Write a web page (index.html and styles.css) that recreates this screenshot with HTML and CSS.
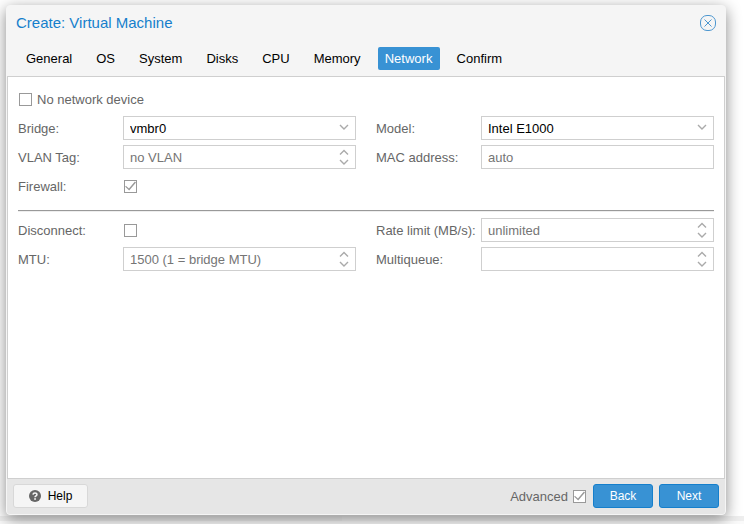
FILE: index.html
```html
<!DOCTYPE html>
<html lang="en">
<head>
    <meta charset="UTF-8">
    <meta name="viewport" content="width=device-width, initial-scale=1.0">
    <title>Create: Virtual Machine</title>
    <link rel="stylesheet" href="styles.css">
</head>
<body>
    <svg class="symbols" aria-hidden="true">
        <symbol id="down" viewBox="0 0 10 6">
            <path d="M1 1l4 4 4-4" fill="none" stroke="#aaa" stroke-width="1.4"/>
        </symbol>
        <symbol id="spin" viewBox="0 0 10 16">
            <path d="M1 5.500l4-4 4 4M1 11l4 4 4-4" fill="none" stroke="#aaa" stroke-width="1.4"/>
        </symbol>
    </svg>

    <form class="window">
        <header class="title-bar">
            <h1>Create: Virtual Machine</h1>
            <button type="button" class="close" aria-label="Close">
                <svg width="16" height="16" viewBox="0 0 16 16" fill="none" stroke="#4d97cf">
                    <rect x="0.5" y="0.5" width="15" height="15" rx="6.500"/>
                    <path d="M4.500 4.500l7 7M11.500 4.500l-7 7"/>
                </svg>
            </button>
        </header>
        <nav class="tabs">
            <button type="button">General</button>
            <button type="button">OS</button>
            <button type="button">System</button>
            <button type="button">Disks</button>
            <button type="button">CPU</button>
            <button type="button">Memory</button>
            <button type="button" class="active">Network</button>
            <button type="button">Confirm</button>
        </nav>

        <main class="panel">
            <div class="check-row">
                <input type="checkbox" id="nonet">
                <label for="nonet">No network device</label>
            </div>
            <div class="columns">
                <div class="column">
                    <div class="field">
                        <label for="bridge">Bridge:</label>
                        <div class="control">
                            <select id="bridge"><option>vmbr0</option></select>
                            <svg class="arrow down"><use href="#down"/></svg>
                        </div>
                    </div>
                    <div class="field">
                        <label for="vlan">VLAN Tag:</label>
                        <div class="control">
                            <input type="text" id="vlan" placeholder="no VLAN">
                            <svg class="arrow spin"><use href="#spin"/></svg>
                        </div>
                    </div>
                    <div class="field">
                        <label for="firewall">Firewall:</label>
                        <input type="checkbox" id="firewall" checked>
                    </div>
                </div>
                <div class="column">
                    <div class="field">
                        <label for="model">Model:</label>
                        <div class="control">
                            <select id="model"><option>Intel E1000</option></select>
                            <svg class="arrow down"><use href="#down"/></svg>
                        </div>
                    </div>
                    <div class="field">
                        <label for="mac">MAC address:</label>
                        <div class="control">
                            <input type="text" id="mac" placeholder="auto">
                        </div>
                    </div>
                </div>
            </div>
            <hr>
            <div class="columns">
                <div class="column">
                    <div class="field">
                        <label for="disconnect">Disconnect:</label>
                        <input type="checkbox" id="disconnect">
                    </div>
                    <div class="field">
                        <label for="mtu">MTU:</label>
                        <div class="control">
                            <input type="text" id="mtu" placeholder="1500 (1 = bridge MTU)">
                            <svg class="arrow spin"><use href="#spin"/></svg>
                        </div>
                    </div>
                </div>
                <div class="column">
                    <div class="field">
                        <label for="rate">Rate limit (MB/s):</label>
                        <div class="control">
                            <input type="text" id="rate" placeholder="unlimited">
                            <svg class="arrow spin"><use href="#spin"/></svg>
                        </div>
                    </div>
                    <div class="field">
                        <label for="queues">Multiqueue:</label>
                        <div class="control">
                            <input type="text" id="queues">
                            <svg class="arrow spin"><use href="#spin"/></svg>
                        </div>
                    </div>
                </div>
            </div>
        </main>

        <footer class="toolbar">
            <button type="button" class="btn help">
                <svg width="12" height="12" viewBox="0 0 12 12">
                    <circle cx="6" cy="6" r="6" fill="#666"/>
                    <path d="M4 4.600C4.200 2.500 8 2.500 7.900 4.700C7.800 5.900 6 5.900 6 7.300" fill="none" stroke="#f5f5f5" stroke-width="1.6"/>
                    <rect x="5.200" y="8.200" width="1.700" height="1.600" fill="#f5f5f5"/>
                </svg>
                Help
            </button>
            <label for="advanced" class="advanced">Advanced</label>
            <input type="checkbox" id="advanced" checked>
            <button type="button" class="btn primary">Back</button>
            <button type="button" class="btn primary">Next</button>
        </footer>
    </form>

    <div class="splitter"><span class="handle"></span></div>
    <div class="log"></div>
</body>
</html>
```

FILE: styles.css
```css
* {
    box-sizing: border-box;
}

body {
    display: flex;
    flex-direction: column;
    min-height: 100vh;
    margin: 0;
    overflow: hidden;
    background: white;
    color: #666;
    font: 13px/16px "Liberation Sans", Arial, sans-serif;
}

button, input, select {
    margin: 0;
    font: inherit;
}

label {
    padding-top: 2px;
}

.symbols {
    display: none;
}

.window {
    position: relative;
    z-index: 1;
    flex: 1;
    display: flex;
    flex-direction: column;
    margin: 5px 18px 1px 6px;
    border: 1px solid #f5f5f5;
    border-radius: 4px;
    background: #f5f5f5;
    box-shadow: 0 4px 15px #888;
}

.title-bar {
    display: flex;
    justify-content: space-between;
    align-items: center;
    height: 34px;
    padding: 0 9px;
}

h1 {
    margin: 0;
    color: #157fcc;
    font-size: 15px;
    font-weight: normal;
}

.close {
    display: flex;
    padding: 0;
    border: none;
    background: none;
}

.tabs {
    display: flex;
    gap: 10px;
    padding: 7px 12px 6px;
}

.tabs button {
    height: 23px;
    padding: 0 7px;
    border: none;
    border-radius: 2px;
    background: none;
    color: black;
}

.tabs .active {
    min-width: 62px;
    background: #3892d4;
    color: white;
}

.panel {
    flex: 1;
    padding: 10px;
    border: 1px solid #cfcfcf;
    background: white;
}

.check-row, .field {
    display: flex;
    align-items: center;
    height: 24px;
    margin-bottom: 5px;
}

.check-row {
    gap: 5px;
}

.columns {
    display: grid;
    grid-template-columns: 1fr 1fr;
    gap: 20px;
}

.field label {
    width: 105px;
    white-space: nowrap;
}

.control {
    position: relative;
    flex: 1;
}

.control input, .control select {
    display: block;
    width: 100%;
    height: 24px;
    padding: 0 6px;
    appearance: none;
    border: 1px solid #cfcfcf;
    border-radius: 0;
    background: white;
    color: black;
}

.control select {
    padding-top: 1px;
}

.control input::placeholder {
    color: #757575;
}

.arrow {
    position: absolute;
    right: 7px;
    width: 10px;
    pointer-events: none;
}

.arrow.down {
    top: 8px;
    height: 6px;
}

.arrow.spin {
    top: 4px;
    height: 16px;
}

input[type="checkbox"] {
    width: 13px;
    height: 13px;
    margin-left: 1px;
    appearance: none;
    border: 1px solid #999;
    background: white;
}

input[type="checkbox"]:checked::before {
    content: "";
    display: block;
    width: 11px;
    height: 11px;
    background: #999;
    clip-path: polygon(0 55%, 10% 50%, 36% 73%, 90% 10%, 100% 18%, 38% 92%);
}

hr {
    height: 2px;
    margin: 7px 0 6px;
    border: none;
    border-top: 1px solid #999;
    border-bottom: 1px solid #eee;
}

.toolbar {
    display: flex;
    align-items: center;
    gap: 6px;
    padding: 5px 6px 6px;
    border-radius: 0 0 3px 3px;
    background: #e6e6e6;
}

.btn {
    display: flex;
    justify-content: center;
    align-items: center;
    min-width: 60px;
    height: 24px;
    border: 1px solid #d8d8d8;
    border-radius: 3px;
    background: #f5f5f5;
    color: black;
    font-size: 12px;
}

.help {
    gap: 7px;
    min-width: 75px;
}

.primary {
    border-color: #157fcc;
    background: #3892d4;
    color: white;
}

.advanced {
    margin-left: auto;
}

.toolbar input[type="checkbox"] {
    margin: 0 1px 0 -1px;
}

.splitter {
    display: flex;
    justify-content: center;
    height: 5px;
    padding-right: 12px;
    background: #eee;
}

.handle {
    width: 48px;
    background: #f5f5f5;
}

.log {
    height: 3px;
    background: #fafafa;
}
```
